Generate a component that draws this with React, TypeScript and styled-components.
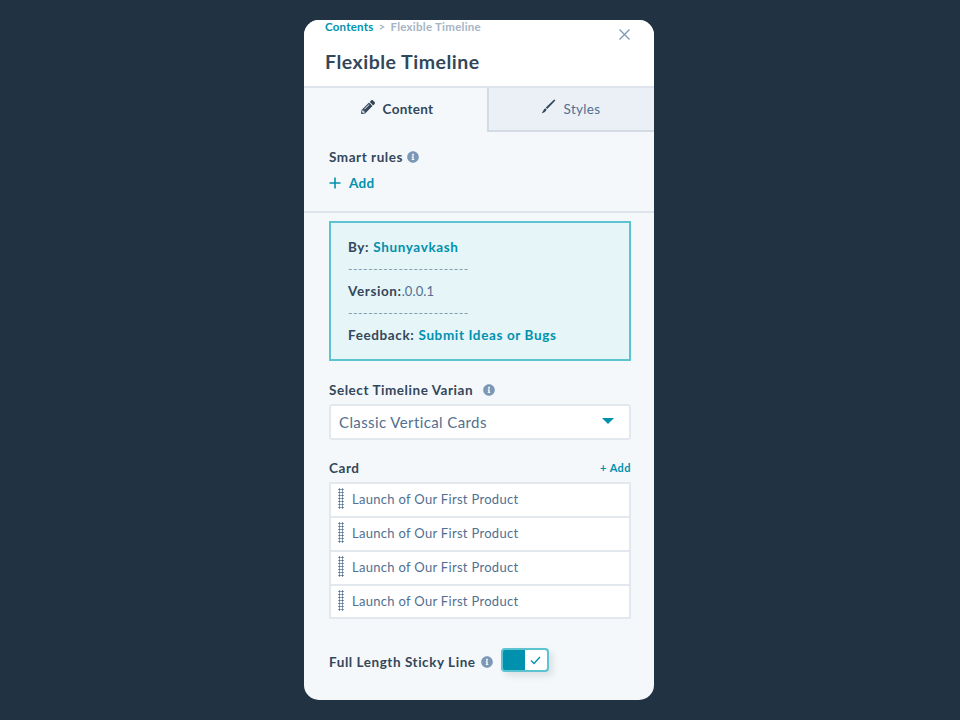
import styled, { createGlobalStyle } from "styled-components";
import { FaInfoCircle, FaPencilAlt } from "react-icons/fa";

const GlobalStyle = createGlobalStyle`
  html, body {
    margin: 0;
    height: 100%;
    background: #213343;
  }
  body {
    font-family: "Lato", "Open Sans", sans-serif;
    color: #33475b;
  }
`;

const Page = styled.div`
  display: flex;
  justify-content: center;
  padding: 20px 2px 0 0;
  height: 720px;
  box-sizing: border-box;
`;

const Panel = styled.div`
  position: relative;
  display: flex;
  flex-direction: column;
  width: 350px;
  height: 680px;
  border-radius: 15px;
  overflow: hidden;
  background: #f5f8fa;
`;

const Header = styled.header`
  background: #fff;
  height: 66px;
  padding: 0 21px;
  border-bottom: 2px solid #dfe3eb;
`;

const Crumbs = styled.div`
  display: flex;
  align-items: center;
  gap: 5px;
  height: 13px;
  font-size: 11.5px;
  font-weight: 700;
  color: #a5b5c6;
  letter-spacing: 0.25px;
`;

const CrumbLink = styled.span`
  color: #0091ae;
`;

const CrumbSep = styled.span`
  font-weight: 400;
  color: #99acc2;
`;

const Title = styled.h1`
  margin: 16px 0 0;
  font-size: 19.5px;
  line-height: 26px;
  font-weight: 700;
  color: #33475b;
  letter-spacing: 0.5px;
`;

const CloseButton = styled.button`
  position: absolute;
  top: 8px;
  right: 23px;
  width: 13px;
  height: 13px;
  padding: 0;
  border: 0;
  background: none;
  color: #7c98b6;
  svg {
    display: block;
  }
`;

const Tabs = styled.div`
  display: flex;
  height: 44px;
  box-sizing: border-box;
`;

const Tab = styled.div<{ $active?: boolean }>`
  display: flex;
  align-items: center;
  justify-content: center;
  gap: 8px;
  box-sizing: border-box;
  width: ${({ $active }) => ($active ? "183px" : "167px")};
  padding: ${({ $active }) => ($active ? "0 1px 2px 4px" : "0 2px 0 0")};
  font-size: 13.5px;
  letter-spacing: 0.3px;
  font-weight: ${({ $active }) => ($active ? 700 : 400)};
  color: ${({ $active }) => ($active ? "#33475b" : "#516f90")};
  background: ${({ $active }) => ($active ? "#f5f8fa" : "#eaf0f6")};
  border-left: ${({ $active }) => ($active ? "0" : "2px solid #d3dce6")};
  border-bottom: ${({ $active }) => ($active ? "0" : "2px solid #d3dce6")};
`;

const TabIcon = styled.span`
  display: flex;
  margin-top: -5px;
  color: #33475b;
`;

const SmartRules = styled.section`
  height: 81px;
  padding: 16px 25px 0;
  box-sizing: border-box;
  border-bottom: 2px solid #dfe3eb;
`;

const Label = styled.div`
  display: flex;
  align-items: center;
  gap: 4px;
  font-size: 13.5px;
  line-height: 18px;
  font-weight: 700;
  color: #33475b;
  letter-spacing: 0.55px;
`;

const InfoIcon = styled(FaInfoCircle)<{ $gap?: number }>`
  width: 12px;
  height: 12px;
  color: #7c98b6;
  margin-left: ${({ $gap }) => $gap ?? 0}px;
`;

const AddLink = styled.div`
  display: flex;
  align-items: center;
  gap: 8px;
  margin-top: 8px;
  font-size: 13.5px;
  line-height: 18px;
  font-weight: 700;
  letter-spacing: 0.35px;
  color: #0091ae;
`;

const Body = styled.div`
  display: flex;
  flex-direction: column;
  padding: 8px 23px 0 25px;
`;

const InfoBox = styled.div`
  display: flex;
  flex-direction: column;
  height: 140px;
  box-sizing: border-box;
  padding: 13px 17px 0;
  background: #e5f5f8;
  border: 2px solid #5cc3d0;
  font-size: 13.5px;
  line-height: 22px;
  letter-spacing: 0.62px;
`;

const Strong = styled.b`
  font-weight: 700;
`;

const Accent = styled.span`
  font-weight: 700;
  color: #0091ae;
`;

const Muted = styled.span`
  color: #516f90;
  font-size: 13px;
  letter-spacing: 0.1px;
`;

const Dashes = styled.div`
  color: #7c98a8;
  font-size: 12px;
  letter-spacing: 0.58px;
`;

const FieldLabel = styled(Label)`
  margin-top: 20px;
`;

const Select = styled.div`
  display: flex;
  align-items: center;
  justify-content: space-between;
  height: 36px;
  margin-top: 5px;
  padding: 0 15px 0 8px;
  box-sizing: border-box;
  background: #fff;
  border: 2px solid #e3e8ef;
  border-radius: 3px;
  font-size: 15px;
  color: #516f90;
  letter-spacing: 0.4px;
`;

const Caret = styled.span`
  width: 0;
  height: 0;
  margin-top: -2px;
  border-left: 6px solid transparent;
  border-right: 6px solid transparent;
  border-top: 6px solid #0091ae;
`;

const CardHeader = styled.div`
  display: flex;
  align-items: center;
  justify-content: space-between;
  margin-top: 19px;
`;

const SmallAdd = styled.span`
  font-size: 11px;
  line-height: 16px;
  font-weight: 700;
  color: #0091ae;
  letter-spacing: 0.45px;
`;

const CardList = styled.div`
  display: flex;
  flex-direction: column;
  margin-top: 5px;
  border: 2px solid #e3e8ef;
  background: #fff;
`;

const CardRow = styled.div`
  display: flex;
  align-items: center;
  gap: 8px;
  height: 32px;
  box-sizing: border-box;
  padding: 0 0 2px 7px;
  font-size: 13px;
  letter-spacing: 0.3px;
  color: #516f90;
  & + & {
    height: 33.75px;
    padding-bottom: 1px;
    border-top: 2px solid #e3e8ef;
  }
`;

const DragHandle = styled.span`
  width: 6px;
  height: 21px;
  margin-top: -1px;
  background-image: radial-gradient(circle at center, #516f90 0.9px, transparent 1.2px);
  background-size: 3px 3px;
`;

const ToggleRow = styled.div`
  display: flex;
  align-items: center;
  margin-top: 29px;
`;

const ToggleLabel = styled(Label)`
  margin: 3px 8px 0 0;
`;

const Toggle = styled.div`
  display: flex;
  width: 48px;
  height: 24px;
  box-sizing: border-box;
  border: 2px solid #5cc3d0;
  border-radius: 4px;
  background: #0091ae;
  overflow: hidden;
  box-shadow: 4px 4px 6px rgba(45, 62, 80, 0.12);
`;

const ToggleKnob = styled.span`
  display: flex;
  align-items: center;
  justify-content: center;
  margin-left: auto;
  width: 22px;
  background: #fff;
  color: #0091ae;
`;

const Brush = () => (
  <svg width="15" height="15" viewBox="0 0 15 15">
    <path
      d="M13.2 0.4 14.4 1.6 6.2 10 4.8 8.6Z M4.2 9.2 5.6 10.6C5.2 12.6 3 13.8 0.6 14.2 2 12.8 2.4 10.4 4.2 9.2Z"
      fill="currentColor"
    />
  </svg>
);

const cards = [1, 2, 3, 4];

export default function App() {
  return (
    <>
      <GlobalStyle />
      <Page>
        <Panel>
          <Header>
            <Crumbs>
              <CrumbLink>Contents</CrumbLink>
              <CrumbSep>&gt;</CrumbSep>
              <span>Flexible Timeline</span>
            </Crumbs>
            <Title>Flexible Timeline</Title>
          </Header>
          <CloseButton aria-label="Close">
            <svg width="13" height="13" viewBox="0 0 13 13">
              <path d="M1.5 1.5 11.5 11.5M11.5 1.5 1.5 11.5" stroke="currentColor" strokeWidth="1.3" />
            </svg>
          </CloseButton>
          <Tabs>
            <Tab $active>
              <TabIcon>
                <FaPencilAlt size={14} />
              </TabIcon>
              Content
            </Tab>
            <Tab>
              <TabIcon>
                <Brush />
              </TabIcon>
              Styles
            </Tab>
          </Tabs>
          <SmartRules>
            <Label>
              Smart rules <InfoIcon />
            </Label>
            <AddLink>
              <svg width="12" height="12" viewBox="0 0 12 12">
                <path d="M6 0.5V11.5M0.5 6H11.5" stroke="currentColor" strokeWidth="1.6" />
              </svg>
              Add
            </AddLink>
          </SmartRules>
          <Body>
            <InfoBox>
              <div>
                <Strong>By:</Strong> <Accent>Shunyavkash</Accent>
              </div>
              <Dashes>------------------------</Dashes>
              <div>
                <Strong>Version:</Strong>
                <Muted>.0.0.1</Muted>
              </div>
              <Dashes>------------------------</Dashes>
              <div>
                <Strong>Feedback:</Strong> <Accent>Submit Ideas or Bugs</Accent>
              </div>
            </InfoBox>
            <FieldLabel>
              Select Timeline Varian <InfoIcon $gap={6} />
            </FieldLabel>
            <Select>
              Classic Vertical Cards
              <Caret />
            </Select>
            <CardHeader>
              <Label>Card</Label>
              <SmallAdd>+ Add</SmallAdd>
            </CardHeader>
            <CardList>
              {cards.map((card) => (
                <CardRow key={card}>
                  <DragHandle />
                  Launch of Our First Product
                </CardRow>
              ))}
            </CardList>
            <ToggleRow>
              <ToggleLabel>
                Full Length Sticky Line <InfoIcon $gap={1} />
              </ToggleLabel>
              <Toggle>
                <ToggleKnob>
                  <svg width="11" height="9" viewBox="0 0 11 9">
                    <path d="M1 4.5 4 7.5 10 1" fill="none" stroke="currentColor" strokeWidth="1.3" />
                  </svg>
                </ToggleKnob>
              </Toggle>
            </ToggleRow>
          </Body>
        </Panel>
      </Page>
    </>
  );
}
